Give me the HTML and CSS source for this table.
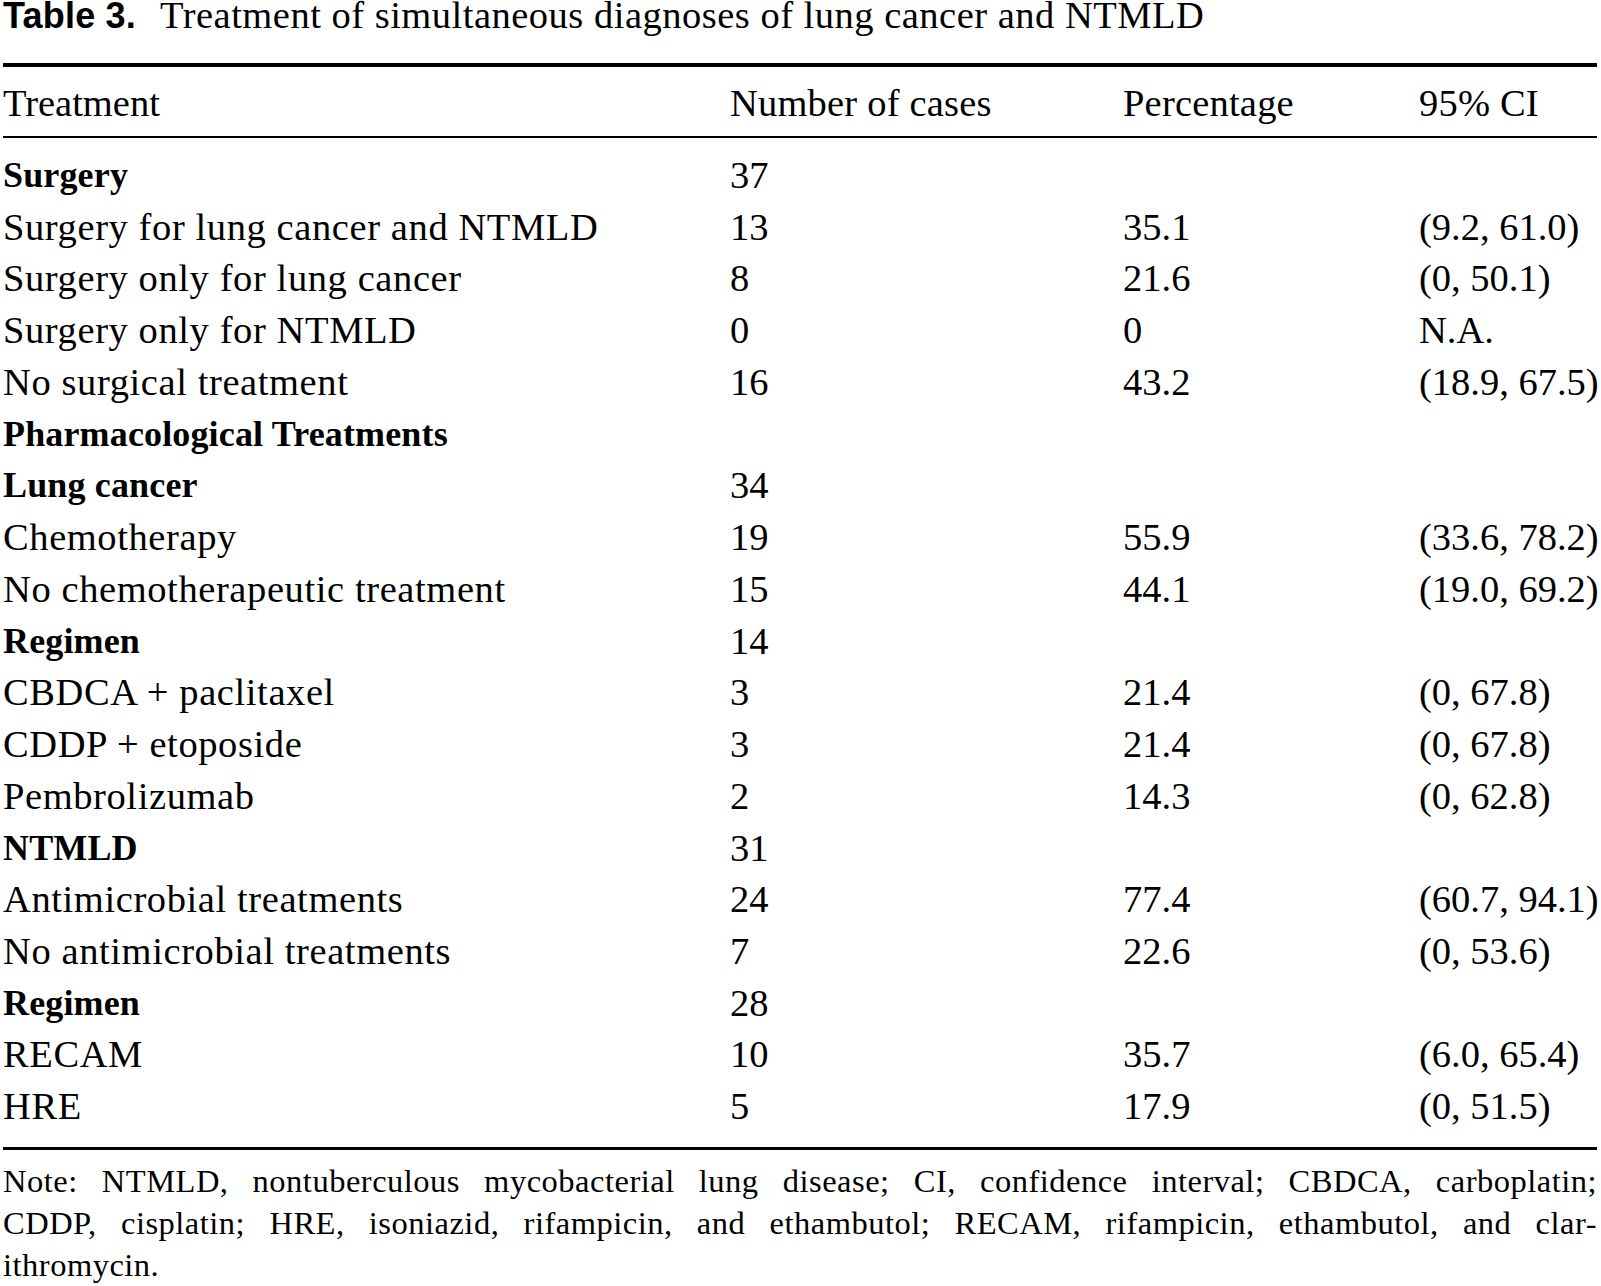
FILE: index.html
```html
<!DOCTYPE html>
<html lang="en">
<head>
<meta charset="utf-8">
<title>Table 3</title>
<link rel="stylesheet" href="styles.css">
</head>
<body>
<div class="page">
  <div class="caption"><span class="label">Table 3.</span><span class="caption-text">Treatment of simultaneous diagnoses of lung cancer and NTMLD</span></div>
  <div class="table">
    <div class="row head"><span>Treatment</span><span>Number of cases</span><span>Percentage</span><span>95% CI</span></div>
    <div class="body">
      <div class="row bold"><span>Surgery</span><span class="num">37</span><span></span><span></span></div>
      <div class="row"><span>Surgery for lung cancer and NTMLD</span><span>13</span><span>35.1</span><span>(9.2, 61.0)</span></div>
      <div class="row"><span>Surgery only for lung cancer</span><span>8</span><span>21.6</span><span>(0, 50.1)</span></div>
      <div class="row"><span>Surgery only for NTMLD</span><span>0</span><span>0</span><span>N.A.</span></div>
      <div class="row"><span>No surgical treatment</span><span>16</span><span>43.2</span><span>(18.9, 67.5)</span></div>
      <div class="row bold"><span>Pharmacological Treatments</span><span></span><span></span><span></span></div>
      <div class="row bold"><span>Lung cancer</span><span class="num">34</span><span></span><span></span></div>
      <div class="row"><span>Chemotherapy</span><span>19</span><span>55.9</span><span>(33.6, 78.2)</span></div>
      <div class="row"><span>No chemotherapeutic treatment</span><span>15</span><span>44.1</span><span>(19.0, 69.2)</span></div>
      <div class="row bold"><span>Regimen</span><span class="num">14</span><span></span><span></span></div>
      <div class="row"><span>CBDCA + paclitaxel</span><span>3</span><span>21.4</span><span>(0, 67.8)</span></div>
      <div class="row"><span>CDDP + etoposide</span><span>3</span><span>21.4</span><span>(0, 67.8)</span></div>
      <div class="row"><span>Pembrolizumab</span><span>2</span><span>14.3</span><span>(0, 62.8)</span></div>
      <div class="row bold"><span>NTMLD</span><span class="num">31</span><span></span><span></span></div>
      <div class="row"><span>Antimicrobial treatments</span><span>24</span><span>77.4</span><span>(60.7, 94.1)</span></div>
      <div class="row"><span>No antimicrobial treatments</span><span>7</span><span>22.6</span><span>(0, 53.6)</span></div>
      <div class="row bold"><span>Regimen</span><span class="num">28</span><span></span><span></span></div>
      <div class="row"><span>RECAM</span><span>10</span><span>35.7</span><span>(6.0, 65.4)</span></div>
      <div class="row"><span>HRE</span><span>5</span><span>17.9</span><span>(0, 51.5)</span></div>
    </div>
  </div>
  <p class="note">Note: NTMLD, nontuberculous mycobacterial lung disease; CI, confidence interval; CBDCA, carboplatin;<br>CDDP, cisplatin; HRE, isoniazid, rifampicin, and ethambutol; RECAM, rifampicin, ethambutol, and clar-<br>ithromycin.</p>
</div>
</body>
</html>
```
FILE: styles.css
```css
html, body {
  margin: 0;
  padding: 0;
  background: #fff;
}

.page {
  width: 1594px;
  margin-left: 3px;
  color: #000;
  font-family: "Liberation Serif", "Times New Roman", serif;
  font-size: 38.5px;
  letter-spacing: 0;
}

.caption {
  line-height: 31px;
  height: 31px;
  margin-bottom: 32px;
  white-space: nowrap;
  letter-spacing: 0.5px;
}

.caption .label {
  font-family: "Liberation Sans", Arial, sans-serif;
  font-weight: bold;
  font-size: 36px;
  letter-spacing: 0.2px;
  margin-right: 24px;
}

.table {
  border-top: 4px solid #000;
  border-bottom: 3px solid #000;
}

.row {
  display: grid;
  grid-template-columns: 727px 393px 296px 1fr;
  line-height: 51.74px;
  white-space: nowrap;
}

.row span:first-child {
  letter-spacing: 0.6px;
}

.row.head {
  line-height: 65px;
  padding-top: 4px;
  border-bottom: 2px solid #000;
  letter-spacing: 0.2px;
}

.row.head span:first-child {
  letter-spacing: 0;
}

.body {
  padding-top: 12px;
  padding-bottom: 14px;
}

.row.bold span:first-child {
  font-weight: bold;
  font-size: 36px;
  letter-spacing: 0.15px;
}

.note {
  margin: 10px 0 0;
  font-size: 32.5px;
  letter-spacing: 0.5px;
  line-height: 42px;
  text-align: justify;
  text-align-last: justify;
}
```
